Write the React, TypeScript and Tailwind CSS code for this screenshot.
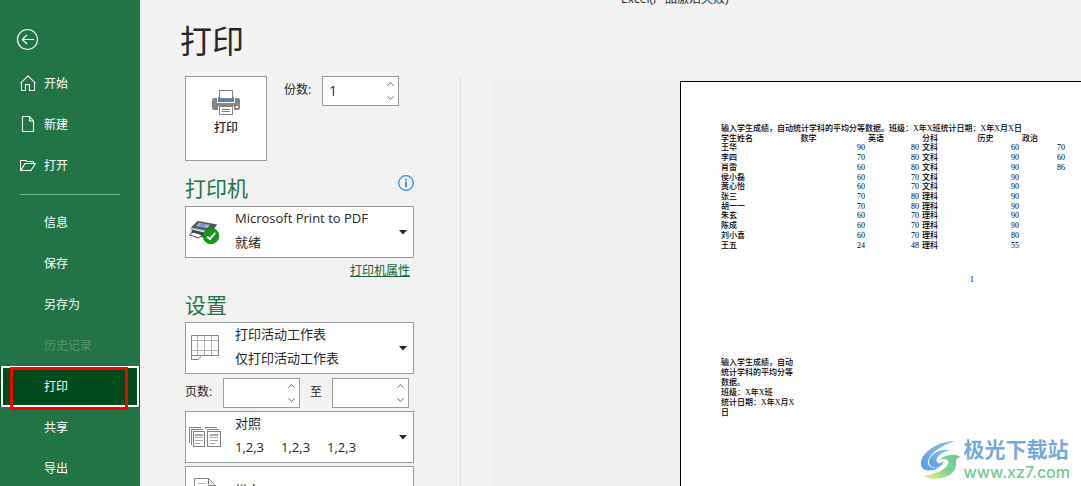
import { useState, ReactNode } from 'react';

interface MenuEntry {
  label: string;
  icon?: ReactNode;
  disabled?: boolean;
}

function HomeIcon() {
  return (
    <svg width="16" height="17" viewBox="0 0 16 17" fill="none" stroke="currentColor" strokeWidth="1.1">
      <path d="M0.5 8.2L8 0.9L15.5 8.2M1.5 7.5V15.5H5.5V9.5H9.5V15.5H14.5V7.5" />
    </svg>
  );
}

function FileIcon() {
  return (
    <svg width="16" height="17" viewBox="0 0 16 17" fill="none" stroke="currentColor" strokeWidth="1.1">
      <path d="M2.5 0.5H9.5L13.5 5V15.5H2.5ZM9.5 0.5V5H13.5" />
    </svg>
  );
}

function FolderIcon() {
  return (
    <svg width="16" height="13" viewBox="0 0 16 13" fill="none" stroke="currentColor" strokeWidth="1.1">
      <path d="M0.5 11.5V1.5H6L7 2.5H13.5V4.5M0.5 11.5H11L15.4 4.5H5L0.8 11.2" />
    </svg>
  );
}

function PrinterIcon() {
  return (
    <svg width="28" height="26" viewBox="0 0 28 26">
      <path d="M2 8H26Q28 8 28 10V18Q28 20 26 20H2Q0 20 0 18V10Q0 8 2 8Z" fill="#858585" />
      <rect x="5" y="7" width="18" height="6" fill="#fff" />
      <rect x="6" y="7" width="16" height="5" fill="#4a82c3" />
      <rect x="7.5" y="0.5" width="13" height="8" fill="#fff" stroke="#858585" />
      <rect x="6" y="16" width="16" height="5" fill="#fff" />
      <rect x="7.5" y="16.5" width="13" height="8" fill="#fff" stroke="#858585" />
      <path d="M10 19.5H18M10 21.5H18" stroke="#4a82c3" />
      <rect x="24" y="16" width="2" height="2" fill="#fff" />
    </svg>
  );
}

function ReadyPrinterIcon() {
  return (
    <svg width="32" height="26" viewBox="0 0 32 26">
      <path d="M2 8L9 2L28 5V13L22 20L1 14Z" fill="#e3e5e7" />
      <path d="M2 8.5L8.5 2L28 5.5L23 12.5Z" fill="#50565b" />
      <path d="M9.5 3.8L21 5.8L18.5 9.3L7 7Z" fill="#9fb2c4" />
      <path d="M12 4.6L17 5.4L14.5 7.6L10.5 6.8Z" fill="#5e9ade" />
      <path d="M2 9L22 13.2V20L13 18.5L2 13Z" fill="#f0f1f2" stroke="#7b8084" strokeWidth="0.6" />
      <path d="M3 10.5L16 13.8V17.5L12.5 17.5L3 13.5Z" fill="#3f4447" />
      <path d="M4 13L0.5 15.8L9.5 19L13.5 16Z" fill="#fff" stroke="#3f4447" />
      <circle cx="22" cy="17" r="7.9" fill="#0c9a17" stroke="#0a7c12" strokeWidth="0.6" />
      <path d="M17.8 17.2L20.8 20L26.2 13.8" fill="none" stroke="#fff" strokeWidth="2" />
    </svg>
  );
}

function SheetIcon() {
  return (
    <svg width="28" height="26" viewBox="0 0 28 26" fill="none">
      <rect x="0.5" y="0.5" width="27" height="20" fill="#fff" />
      <path d="M6.5 1V20M13.5 1V20M20.5 1V20M1 5.5H27M1 15.5H27" stroke="#b3b3b3" />
      <path d="M0.5 20.5V0.5H27.5V20.5H0.5V24.5H7.5L10.5 20.5" stroke="#858585" />
    </svg>
  );
}

function CollateIcon() {
  return (
    <svg width="33" height="21" viewBox="0 0 33 21" fill="none" stroke="#808080">
      <path d="M0.5 16V0.5H12M2.5 18V2.5H14M16.5 2V0.5H28M18.5 3.5V2.5H30" />
      <rect x="4.5" y="4.5" width="11" height="15" fill="#fff" />
      <rect x="18.5" y="4.5" width="13" height="15" fill="#fff" />
      <path d="M6 7.5H14M21 7.5H29M6 10.5H14M6 13.5H14M6 16.5H11M21 10.5H29M21 13.5H29M21 16.5H26" stroke="#a8a8a8" />
      <path d="M6 8.5H14M21 8.5H29" stroke="#a8a8a8" />
    </svg>
  );
}

function PortraitIcon() {
  return (
    <svg width="22" height="28" viewBox="0 0 22 28" fill="none" stroke="#858585">
      <path d="M0.5 0.5H14.5L21.5 7.5V27.5H0.5ZM14.5 0.5V7.5H21.5" fill="#fff" />
      <path d="M4 5.5H12M4 9.5H17M4 13.5H17M4 17.5H17" stroke="#b3b3b3" />
    </svg>
  );
}

function Logo() {
  return (
    <svg width="42" height="40" viewBox="0 0 42 40">
      <defs>
        <linearGradient id="blue" x1="0" y1="1" x2="1" y2="0">
          <stop offset="0" stopColor="#5b9ee0" />
          <stop offset="1" stopColor="#7cc6f2" />
        </linearGradient>
        <linearGradient id="green" x1="0" y1="1" x2="1" y2="0">
          <stop offset="0" stopColor="#eef08a" />
          <stop offset="0.5" stopColor="#7ed196" />
          <stop offset="1" stopColor="#6bcb90" />
        </linearGradient>
      </defs>
      <path d="M35 1C18 1 0 13 1 24C1 31 11 33 20 27C13 29 7 27 8 21C10 12 23 5 35 1Z" fill="url(#blue)" />
      <path d="M30 10C19 8 9 15 9 22C10 30 22 29 24 21C20 25 15 23 17 18C19 14 25 12 30 10Z" fill="url(#blue)" />
      <path d="M41 17C33 12 22 16 20 20C25 18 30 19 28 24C25 31 14 34 3 36C17 43 36 36 36 25C36 21 35 18 41 17Z" fill="url(#green)" />
    </svg>
  );
}

const mainEntries: MenuEntry[] = [
  { label: '开始', icon: <HomeIcon /> },
  { label: '新建', icon: <FileIcon /> },
  { label: '打开', icon: <FolderIcon /> },
];

const fileEntries: MenuEntry[] = [
  { label: '信息' },
  { label: '保存' },
  { label: '另存为' },
  { label: '历史记录', disabled: true },
  { label: '打印' },
  { label: '共享' },
  { label: '导出' },
];

const scores = [
  ['王华', '90', '80', '文科', '60', '70'],
  ['李四', '70', '80', '文科', '90', '60'],
  ['肖雷', '60', '80', '文科', '90', '86'],
  ['侯小磊', '60', '70', '文科', '90', ''],
  ['黄心怡', '60', '70', '文科', '90', ''],
  ['张三', '70', '80', '理科', '90', ''],
  ['胡一一', '70', '80', '理科', '90', ''],
  ['朱玄', '60', '70', '理科', '90', ''],
  ['陈成', '60', '70', '理科', '90', ''],
  ['刘小喜', '60', '70', '理科', '80', ''],
  ['王五', '24', '48', '理科', '55', ''],
];

const noteLines = ['输入学生成绩，自动', '统计学科的平均分等', '数据。', '班级：X年X班', '统计日期：X年X月X', '日'];

function MenuItem({ entry, active, onSelect }: { entry: MenuEntry; active: boolean; onSelect: () => void }) {
  return (
    <li className="relative">
      <button
        type="button"
        disabled={entry.disabled}
        onClick={onSelect}
        className={`flex h-[41px] w-full items-center text-left text-xs disabled:text-[#54936e] ${
          active ? 'bg-[#004b1c]' : ''
        }`}
      >
        <span className="ml-5 flex w-6 shrink-0">{entry.icon}</span>
        {entry.label}
      </button>
      {active && (
        <>
          <span className="pointer-events-none absolute inset-x-px inset-y-0 border-2 border-white" />
          <span className="pointer-events-none absolute top-px right-3 -bottom-[3px] left-2.5 border-3 border-[#ff0000]" />
        </>
      )}
    </li>
  );
}

function Spinner({ id, name, initial = '' }: { id: string; name: string; initial?: string }) {
  const [value, setValue] = useState(initial);
  const step = (delta: number) => setValue(String(Math.max(1, Number(value) + delta)));

  return (
    <div className="flex h-[30px] w-[77px] border border-[#9b9b9b] bg-white">
      <input
        id={id}
        inputMode="numeric"
        value={value}
        onChange={(e) => setValue(e.target.value)}
        className="w-0 flex-1 pl-1.5 text-sm text-[#3c1a7d] outline-none"
      />
      <div className="flex w-4 flex-col">
        <button type="button" aria-label={`${name} +`} onClick={() => step(1)} className="flex flex-1 items-center justify-center">
          <svg width="7" height="4" viewBox="0 0 7 4" fill="none" stroke="#6a6a6a"><path d="M0.5 3.5L3.5 0.7L6.5 3.5" /></svg>
        </button>
        <button type="button" aria-label={`${name} -`} onClick={() => step(-1)} className="flex flex-1 items-center justify-center">
          <svg width="7" height="4" viewBox="0 0 7 4" fill="none" stroke="#6a6a6a"><path d="M0.5 0.5L3.5 3.3L6.5 0.5" /></svg>
        </button>
      </div>
    </div>
  );
}

function Picker({ icon, title, children }: { icon: ReactNode; title: string; children?: ReactNode }) {
  return (
    <button
      type="button"
      aria-haspopup="listbox"
      className="flex h-[52px] w-full shrink-0 items-center border border-[#9b9b9b] bg-white pr-1.5 text-left text-[13px] leading-6"
    >
      <span className="flex w-[38px] shrink-0 justify-center">{icon}</span>
      <span className="mb-1 ml-[11px] flex flex-1 flex-col">
        <span>{title}</span>
        {children}
      </span>
      <svg width="8" height="5" viewBox="0 0 8 5" fill="#262626"><path d="M0 0H8L4 4.5Z" /></svg>
    </button>
  );
}

export default function App() {
  const [active, setActive] = useState('打印');

  return (
    <div className="flex h-screen overflow-hidden bg-[#f2f2f2] font-['Open_Sans','Noto_Sans_CJK_SC',sans-serif] text-[#262626]">
      <aside className="w-[140px] shrink-0 bg-[#227447] pt-7 text-white">
        <button type="button" aria-label="返回" className="ml-4 block">
          <svg width="23" height="23" viewBox="0 0 23 23" fill="none" stroke="currentColor">
            <circle cx="11.5" cy="11.5" r="10" strokeWidth="1.2" />
            <path d="M18 11.5H6.5M11 7L6.2 11.5L11 16" strokeWidth="1.2" />
          </svg>
        </button>
        <nav className="mt-3">
          <ul>
            {mainEntries.map((entry) => (
              <MenuItem key={entry.label} entry={entry} active={active === entry.label} onSelect={() => setActive(entry.label)} />
            ))}
          </ul>
          <hr className="mx-5 mt-2 mb-[7px] border-[#73b08c]" />
          <ul>
            {fileEntries.map((entry) => (
              <MenuItem key={entry.label} entry={entry} active={active === entry.label} onSelect={() => setActive(entry.label)} />
            ))}
          </ul>
        </nav>
      </aside>

      <main className="flex min-w-0 flex-1 flex-col">
        <header className="flex h-[7px] shrink-0 items-end pl-[481px] text-xs leading-4">Excel(产品激活失败)</header>
        <h1 className="mt-3.5 mb-[15px] ml-10 text-[32px] leading-10">打印</h1>

        <div className="flex min-h-0 flex-1">
          {/* Print settings */}
          <section className="w-80 shrink-0 pr-[46px] pl-[45px]">
            <div className="flex items-start">
              <button
                type="button"
                className="flex h-[85px] w-[82px] flex-col items-center border border-[#9b9b9b] bg-white pt-[13px] text-xs font-medium"
              >
                <PrinterIcon />
                <span className="mt-1 leading-4">打印</span>
              </button>
              <label htmlFor="copies" className="ml-[17px] w-[38px] text-xs leading-7">份数:</label>
              <Spinner id="copies" name="份数" initial="1" />
            </div>

            <div className="mt-[13px] mb-1 flex justify-between">
              <h2 className="text-[21px] leading-7 text-[#227447]">打印机</h2>
              <button type="button" aria-label="打印机状态" className="h-[18px]">
                <svg width="16" height="16" viewBox="0 0 16 16" fill="none" stroke="#2b8fd4">
                  <circle cx="8" cy="8" r="7.3" strokeWidth="1.3" />
                  <path d="M8 6.5V12M8 3.8V5.4" strokeWidth="1.8" />
                </svg>
              </button>
            </div>
            <Picker icon={<ReadyPrinterIcon />} title="Microsoft Print to PDF">
              <span>就绪</span>
            </Picker>
            <div className="mt-[3px] pr-1 text-right text-xs leading-5">
              <a href="#properties" className="text-[#0f6331] underline">打印机属性</a>
            </div>

            <h2 className="mt-2.5 mb-[3px] text-[21px] leading-7 text-[#227447]">设置</h2>
            <Picker icon={<SheetIcon />} title="打印活动工作表">
              <span>仅打印活动工作表</span>
            </Picker>
            <div className="mt-1 mb-[3px] flex text-xs leading-7">
              <label htmlFor="from" className="w-[38px]">页数:</label>
              <Spinner id="from" name="页数" />
              <label htmlFor="to" className="w-8 text-center">至</label>
              <Spinner id="to" name="至" />
            </div>
            <Picker icon={<CollateIcon />} title="对照">
              <span className="flex gap-[17px]">
                <span>1,2,3</span>
                <span>1,2,3</span>
                <span>1,2,3</span>
              </span>
            </Picker>
            <div className="mt-[3px]">
              <Picker icon={<PortraitIcon />} title="纵向" />
            </div>
          </section>

          {/* Preview */}
          <section className="flex min-w-0 flex-1 border-l border-[#dedede] pl-[31px]">
            <div className="flex min-w-0 flex-1 bg-[#f0f0f0] pt-[5px] pl-[188px]">
              <div className="relative min-w-0 flex-1 border-t border-l border-black bg-white pt-[42px] pl-10 font-['Liberation_Serif','Noto_Sans_CJK_SC',serif] text-[8px] leading-[10px] font-medium text-black">
                <p className="whitespace-nowrap">输入学生成绩，自动统计学科的平均分等数据。班级：X年X班统计日期：X年X月X日</p>
                <table className="h-[116px] w-[345px] table-fixed whitespace-nowrap leading-[9px]">
                  <colgroup>
                    <col className="w-[30px]" />
                    <col className="w-[115px]" />
                    <col className="w-[54px]" />
                    <col className="w-[31px]" />
                    <col className="w-[69px]" />
                    <col className="w-[46px]" />
                  </colgroup>
                  <thead>
                    <tr>
                      <th className="p-0 text-left font-medium">学生姓名</th>
                      <th className="p-0 font-medium">数学</th>
                      <th className="py-0 pr-0 pl-0.5 text-left font-medium">英语</th>
                      <th className="py-0 pr-0 pl-0.5 text-left font-medium">分科</th>
                      <th className="p-0 font-medium">历史</th>
                      <th className="py-0 pr-0 pl-0.5 text-left font-medium">政治</th>
                    </tr>
                  </thead>
                  <tbody>
                    {scores.map(([name, math, english, branch, history, politics]) => (
                      <tr key={name}>
                        <td className="p-0">{name}</td>
                        <td className="py-0 pr-px text-right">{math}</td>
                        <td className="py-0 pr-px text-right">{english}</td>
                        <td className="py-0 pr-0 pl-0.5">{branch}</td>
                        <td className="py-0 pr-px text-right">{history}</td>
                        <td className="py-0 pr-px text-right">{politics}</td>
                      </tr>
                    ))}
                  </tbody>
                </table>
                <p className="mt-[25px] w-[502px] text-center">1</p>
                <div className="mt-[73px]">
                  {noteLines.map((line) => (
                    <p key={line}>{line}</p>
                  ))}
                </div>

                <div className="absolute right-[11px] bottom-1 flex items-center font-['Inter','Noto_Sans_CJK_SC',sans-serif]">
                  <Logo />
                  <div className="ml-0.5">
                    <p className="text-[21px] leading-6 font-bold text-[#75a9de]">极光下载站</p>
                    <p className="text-base leading-5 font-medium text-[#6fca8f]">www.xz7.com</p>
                  </div>
                </div>
              </div>
            </div>
          </section>
        </div>
      </main>
    </div>
  );
}
